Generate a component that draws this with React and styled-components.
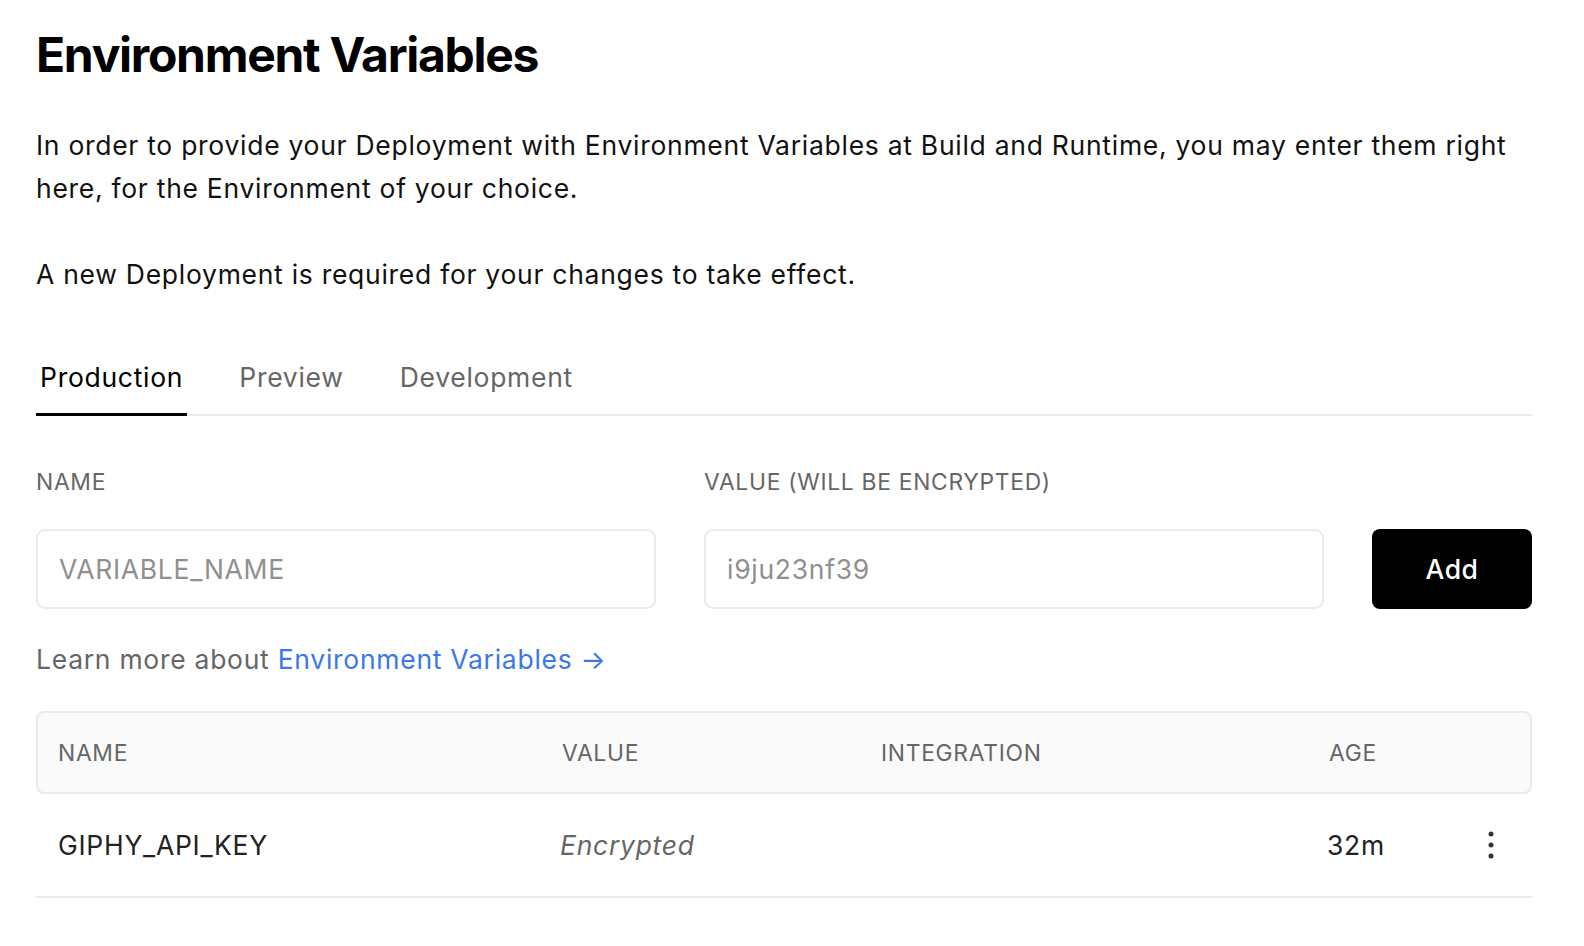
import React from 'react';
import styled, { createGlobalStyle } from 'styled-components';

const GlobalStyle = createGlobalStyle`
  body {
    margin: 0;
    background: #fff;
    font-family: Inter, "Noto Sans", sans-serif;
    color: #000;
    letter-spacing: 0.045em;
    -webkit-font-smoothing: antialiased;
  }
  * { box-sizing: border-box; }
`;

const Page = styled.div`
  width: 1496px;
  margin-left: 36px;
  padding-top: 26px;
`;

const Title = styled.h1`
  margin: 0;
  font-size: 48px;
  line-height: 58px;
  font-weight: 700;
  letter-spacing: -0.027em;
`;

const Text = styled.p`
  margin: ${props => (props.first ? '40px 0 0' : '43px 0 0')};
  font-size: 26.5px;
  line-height: 43px;
  color: #111;
`;

const Tabs = styled.div`
  display: flex;
  gap: 48px;
  margin-top: 63px;
  border-bottom: 2px solid #eaeaea;
`;

const Tab = styled.div`
  padding: 0 4px 18px;
  margin-bottom: -2px;
  font-size: 26.5px;
  line-height: 36px;
  color: ${props => (props.active ? '#000' : '#666')};
  border-bottom: 3px solid ${props => (props.active ? '#000' : 'transparent')};
`;

const Form = styled.div`
  display: grid;
  grid-template-columns: 1fr 1fr 160px;
  column-gap: 48px;
  margin-top: 52px;
  align-items: end;
`;

const Field = styled.div`
  display: flex;
  flex-direction: column;
  gap: 33px;
`;

const Label = styled.label`
  font-size: 22.8px;
  line-height: 28px;
  color: #666;
  text-transform: uppercase;
`;

const Input = styled.input`
  height: 80px;
  width: 100%;
  padding: 0 21px;
  border: 2px solid #eaeaea;
  border-radius: 9px;
  font-family: inherit;
  font-size: 26.5px;
  letter-spacing: inherit;
  color: #000;
  outline: none;

  &::placeholder {
    color: #8f8f8f;
  }
`;

const AddButton = styled.button`
  height: 80px;
  border: none;
  border-radius: 8px;
  background: #000;
  color: #fff;
  font-family: inherit;
  font-size: 26.5px;
  letter-spacing: 0.02em;
  font-weight: 500;
`;

const Learn = styled.div`
  margin-top: 30px;
  font-size: 26.5px;
  line-height: 40px;
  color: #666;
`;

const Link = styled.a`
  color: #3b78e7;
  text-decoration: none;
`;

const Table = styled.div`
  margin-top: 32px;
`;

const Row = styled.div`
  display: grid;
  grid-template-columns: 504px 319px 448px 1fr 48px;
  align-items: center;
  padding: 0 17px 0 20px;
  height: ${props => (props.head ? '83px' : '104px')};
  background: ${props => (props.head ? '#fafafa' : '#fff')};
  border: 2px solid #eaeaea;
  border-width: ${props => (props.head ? '2px' : '0 0 2px')};
  border-radius: ${props => (props.head ? '8px' : '0')};
`;

const HeadCell = styled.div`
  font-size: 22.8px;
  color: #666;
  text-transform: uppercase;
`;

const Cell = styled.div`
  padding-left: ${props => (props.inset ? '2px' : '0')};
  font-size: 26.5px;
  color: ${props => (props.muted ? '#666' : '#222')};
  font-style: ${props => (props.italic ? 'italic' : 'normal')};
`;

const Kebab = styled.div`
  display: flex;
  justify-content: center;
  align-items: center;
  color: #333;
`;

const MoreIcon = () => (
  <svg width="6" height="28" viewBox="0 0 6 28">
    <circle cx="3" cy="3" r="2.5" fill="currentColor" />
    <circle cx="3" cy="14" r="2.5" fill="currentColor" />
    <circle cx="3" cy="25" r="2.5" fill="currentColor" />
  </svg>
);

export default function App() {
  return (
    <Page>
      <GlobalStyle />
      <Title>Environment Variables</Title>
      <Text first>
        In order to provide your Deployment with Environment Variables at Build and Runtime, you may enter them right
        here, for the Environment of your choice.
      </Text>
      <Text>A new Deployment is required for your changes to take effect.</Text>

      <Tabs>
        <Tab active>Production</Tab>
        <Tab>Preview</Tab>
        <Tab>Development</Tab>
      </Tabs>

      <Form>
        <Field>
          <Label>Name</Label>
          <Input placeholder="VARIABLE_NAME" />
        </Field>
        <Field>
          <Label>Value (will be encrypted)</Label>
          <Input placeholder="i9ju23nf39" />
        </Field>
        <AddButton>Add</AddButton>
      </Form>

      <Learn>
        Learn more about <Link href="#">Environment Variables →</Link>
      </Learn>

      <Table>
        <Row head>
          <HeadCell>Name</HeadCell>
          <HeadCell>Value</HeadCell>
          <HeadCell>Integration</HeadCell>
          <HeadCell>Age</HeadCell>
          <div />
        </Row>
        <Row>
          <Cell inset>GIPHY_API_KEY</Cell>
          <Cell muted italic>Encrypted</Cell>
          <Cell />
          <Cell>32m</Cell>
          <Kebab>
            <MoreIcon />
          </Kebab>
        </Row>
      </Table>
    </Page>
  );
}
